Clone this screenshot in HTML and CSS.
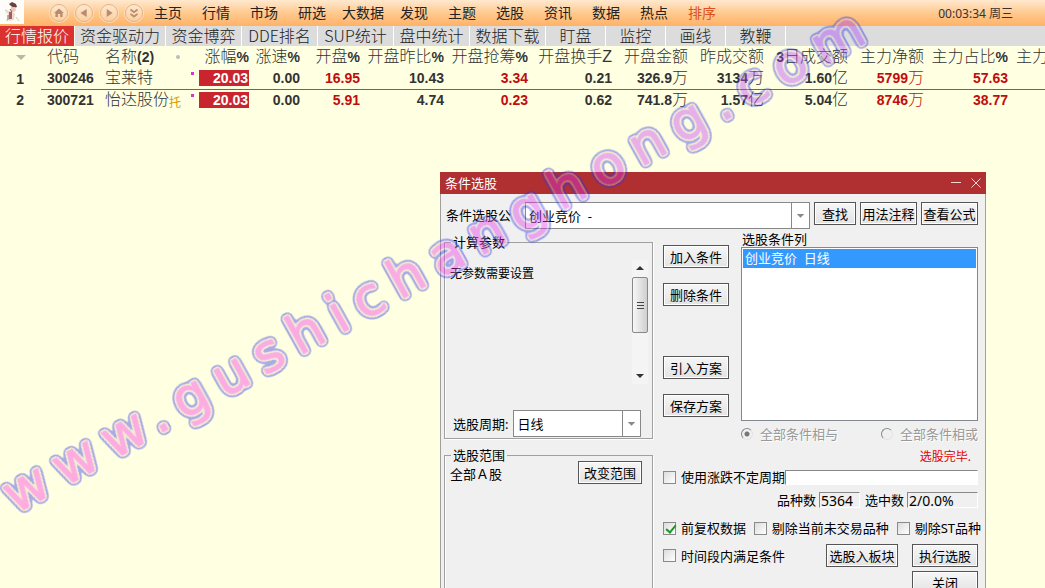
FILE: index.html
```html
<!DOCTYPE html>
<html lang="zh-CN">
<head>
<meta charset="utf-8">
<title>条件选股</title>
<link rel="stylesheet" href="styles.css">
</head>
<body>
<header class="topbar">
  <svg class="logo" viewBox="0 0 24 24" aria-hidden="true">
    <rect width="24" height="24" fill="#fffdf9"/>
    <path d="M9 4l3-2 4 2 1 3-3 1-3-2z" fill="#6b4040"/>
    <path d="M11 7h4l1 3-2 2-3-1z" fill="#f0c8b8"/>
    <path d="M5 9l4 2 3 0 3 3-1 6-5 1-1-7-3-3z" fill="#ead9cc"/>
    <path d="M9 12h3v7H9z" fill="#b05a58"/>
    <path d="M10 9l2 3M8 15v5" stroke="#666" fill="none"/>
    <path d="M16 17l3 4M6 20l2 1" stroke="#c3d0b4" fill="none"/>
  </svg>
  <div class="nav-buttons">
    <button class="round" aria-label="主页"><svg viewBox="0 0 18 18"><path d="M9 4l5.500 5H13v4.500H10.300V10H7.700v3.500H5V9H3.500z"/></svg></button>
    <button class="round" aria-label="后退"><svg viewBox="0 0 18 18"><path d="M12 4.500v9L5 9z"/></svg></button>
    <button class="round" aria-label="前进"><svg viewBox="0 0 18 18"><path d="M6.500 4.500v9L13 9z"/></svg></button>
    <button class="round" aria-label="更多"><svg viewBox="0 0 18 18"><path class="line" d="M5 5l4 3 4-3M5 10l4 3 4-3"/></svg></button>
  </div>
  <nav class="menu">
    <a href="#">主页</a><a href="#">行情</a><a href="#">市场</a><a href="#">研选</a><a href="#" class="wide">大数据</a><a href="#">发现</a><a href="#">主题</a><a href="#">选股</a><a href="#">资讯</a><a href="#">数据</a><a href="#">热点</a><a href="#" class="hot">排序</a>
  </nav>
  <time class="clock">00:03:34 周三</time>
</header>

<nav class="tabs">
  <a href="#" class="active">行情报价</a><a href="#">资金驱动力</a><a href="#">资金博弈</a><a href="#">DDE排名</a><a href="#">SUP统计</a><a href="#">盘中统计</a><a href="#">数据下载</a><a href="#" class="short">盯盘</a><a href="#" class="short">监控</a><a href="#" class="short">画线</a><a href="#" class="short">教鞭</a>
</nav>

<main>
  <table class="quotes">
    <colgroup>
      <col class="c-index"><col class="c-code"><col class="c-name"><col class="c-s"><col class="c-s"><col class="c-m"><col class="c-xl"><col class="c-xl"><col class="c-xl"><col class="c-l"><col class="c-l"><col class="c-xl"><col class="c-l"><col class="c-xl"><col>
    </colgroup>
    <thead>
      <tr>
        <th><svg class="sort" viewBox="0 0 10 5" aria-hidden="true"><path d="M0 0h10L5 5z"/></svg></th>
        <th class="left code">代码</th>
        <th class="left"><div class="name"><span>名称<b>(2)</b></span><i class="grey-dot"></i></div></th>
        <th>涨幅<b>%</b></th><th>涨速<b>%</b></th><th>开盘<b>%</b></th><th>开盘昨比<b>%</b></th><th>开盘抢筹<b>%</b></th><th>开盘换手Z</th><th>开盘金额</th><th>昨成交额</th><th><b>3</b>日成交额</th><th>主力净额</th><th>主力占比<b>%</b></th><th class="left last">主力</th>
      </tr>
    </thead>
    <tbody>
      <tr class="selected">
        <td class="index"><b>1</b></td><td class="left code"><b>300246</b></td>
        <td class="left"><div class="name"><span>宝莱特</span><i class="mark"></i></div></td>
        <td><b class="up-box">20.03</b></td><td><b>0.00</b></td><td class="up"><b>16.95</b></td><td><b>10.43</b></td><td class="up"><b>3.34</b></td><td><b>0.21</b></td><td><b>326.9</b>万</td><td><b>3134</b>万</td><td><b>1.60</b>亿</td><td class="up"><b>5799</b>万</td><td class="up"><b>57.63</b></td><td></td>
      </tr>
      <tr>
        <td class="index"><b>2</b></td><td class="left code"><b>300721</b></td>
        <td class="left"><div class="name"><span>怡达股份<small>托</small></span><i class="mark"></i></div></td>
        <td><b class="up-box">20.03</b></td><td><b>0.00</b></td><td class="up"><b>5.91</b></td><td><b>4.74</b></td><td class="up"><b>0.23</b></td><td><b>0.62</b></td><td><b>741.8</b>万</td><td><b>1.57</b>亿</td><td><b>5.04</b>亿</td><td class="up"><b>8746</b>万</td><td class="up"><b>38.77</b></td><td></td>
      </tr>
    </tbody>
  </table>
</main>

<section class="dialog" role="dialog" aria-labelledby="dialog-title">
  <header class="titlebar">
    <h1 id="dialog-title">条件选股</h1>
    <button class="win" aria-label="最小化"><svg viewBox="0 0 10 10"><path d="M0 4.500h10"/></svg></button>
    <button class="win" aria-label="关闭窗口"><svg viewBox="0 0 10 10"><path d="M.5.500l9 9M9.500.500l-9 9"/></svg></button>
  </header>
  <div class="body">
    <div class="formula">
      <label for="formula">条件选股公</label>
      <div class="combo grow"><select id="formula"><option>创业竞价&nbsp; -</option></select><svg viewBox="0 0 18 24" aria-hidden="true"><path d="M5 10.500h8l-4 4z"/></svg></div>
      <button class="btn find">查找</button>
      <button class="btn tight">用法注释</button>
      <button class="btn tight">查看公式</button>
    </div>
    <div class="columns">
      <div class="left-col">
        <fieldset class="group params">
          <legend>计算参数</legend>
          <div class="param-view">
            <p>无参数需要设置</p>
            <div class="scroll" aria-hidden="true">
              <svg viewBox="0 0 15 17"><path d="M4 10l4-4 4 4z"/></svg>
              <div class="thumb"><i></i><i></i><i></i></div>
              <svg class="down" viewBox="0 0 15 17"><path d="M4 7h8l-4 4z"/></svg>
            </div>
          </div>
          <div class="period">
            <label for="period">选股周期:</label>
            <div class="combo grow"><select id="period"><option>日线</option></select><svg viewBox="0 0 18 24" aria-hidden="true"><path d="M5 10.500h8l-4 4z"/></svg></div>
          </div>
        </fieldset>
        <fieldset class="group range">
          <legend>选股范围</legend>
          <div class="range-row"><span>全部Ａ股</span><button class="btn change">改变范围</button></div>
        </fieldset>
      </div>
      <div class="right-col">
        <div class="conditions">
          <div class="actions">
            <button class="btn">加入条件</button>
            <button class="btn">删除条件</button>
            <button class="btn apart">引入方案</button>
            <button class="btn">保存方案</button>
          </div>
          <div class="list-side">
            <span id="list-label">选股条件列</span>
            <ul class="list" role="listbox" aria-labelledby="list-label"><li role="option" aria-selected="true">创业竞价&nbsp; 日线</li></ul>
            <div class="radios">
              <label><input type="radio" name="logic" checked disabled>全部条件相与</label>
              <label><input type="radio" name="logic" disabled>全部条件相或</label>
            </div>
          </div>
        </div>
        <p class="status">选股完毕.</p>
        <div class="row unfixed">
          <label class="check"><input type="checkbox">使用涨跌不定周期</label>
          <input class="field" type="text" aria-label="周期">
        </div>
        <div class="row counts">
          <label for="total">品种数</label><input id="total" class="field count total" readonly value="5364">
          <label for="hits">选中数</label><input id="hits" class="field count hits" readonly value="2/0.0%">
        </div>
        <div class="row options">
          <label class="check"><input type="checkbox" checked>前复权数据</label>
          <label class="check"><input type="checkbox">剔除当前未交易品种</label>
          <label class="check"><input type="checkbox">剔除ST品种</label>
        </div>
        <div class="row run">
          <label class="check"><input type="checkbox">时间段内满足条件</label>
          <button class="btn block">选股入板块</button>
          <button class="btn">执行选股</button>
        </div>
        <div class="row close"><button class="btn">关闭</button></div>
      </div>
    </div>
  </div>
</section>

<svg class="watermark" aria-hidden="true">
  <defs>
    <linearGradient id="ink" x1="0" x2="1"><stop offset="0" stop-color="#ff32de"/><stop offset=".5" stop-color="#f032e6"/><stop offset="1" stop-color="#a040ff"/></linearGradient>
    <filter id="rings" x="-2%" y="-20%" width="104%" height="140%" color-interpolation-filters="sRGB">
      <feGaussianBlur in="SourceAlpha" stdDeviation="2.500"/>
      <feComponentTransfer result="wide"><feFuncA type="linear" slope="24" intercept="-1"/></feComponentTransfer>
      <feFlood flood-color="#3030e6"/>
      <feComposite in2="wide" operator="in" result="outer"/>
      <feGaussianBlur in="SourceAlpha" stdDeviation="1.500"/>
      <feComponentTransfer result="narrow"><feFuncA type="linear" slope="12" intercept="-1"/></feComponentTransfer>
      <feFlood flood-color="#dcd4c8"/>
      <feComposite in2="narrow" operator="in" result="inner"/>
      <feMerge><feMergeNode in="outer"/><feMergeNode in="inner"/><feMergeNode in="SourceGraphic"/></feMerge>
    </filter>
  </defs>
  <g transform="translate(15 514) rotate(-29)">
    <text>www.gushichanghong.com</text>
  </g>
</svg>
</body>
</html>
```

FILE: styles.css
```css
* { box-sizing: border-box; }

body {
  margin: 0;
  height: 100vh;
  position: relative;
  overflow: hidden;
  background: #ffffe1;
  color: #333;
  font-family: "Liberation Sans", "Noto Sans CJK SC", sans-serif;
}

a { color: inherit; text-decoration: none; }
button, input, select { font: inherit; color: inherit; }
p, h1, ul { margin: 0; padding: 0; }

/* top menu */
.topbar {
  display: flex;
  align-items: center;
  height: 26px;
  background: linear-gradient(#ffe9cf, #ffc98f 50%, #ffb266);
}
.logo { width: 24px; height: 24px; flex: none; align-self: flex-start; }
.nav-buttons { display: flex; gap: 7px; margin-left: 26px; }
.round {
  width: 18px;
  height: 18px;
  padding: 0;
  border: 1px solid #e3b48c;
  border-radius: 50%;
  background: linear-gradient(#ffe8cf, #fbcfa0);
  box-shadow: 0 0 0 1px #ffdfba;
}
.round svg { display: block; width: 16px; height: 16px; fill: #b98c6c; }
.round .line { fill: none; stroke: #b98c6c; stroke-width: 2; }
.menu { display: flex; margin-left: 1px; font-size: 14px; line-height: 26px; color: #222; white-space: nowrap; }
.menu a { width: 48px; text-align: center; }
.menu .wide { width: 54px; }
.menu .hot { color: #d8531f; }
.clock { margin: 0 32px 0 auto; font-family: "Noto Sans", "Noto Sans CJK SC", sans-serif; font-size: 12px; white-space: nowrap; }

/* page tabs */
.tabs {
  display: flex;
  height: 20px;
  background: #dcdcdc;
  font-family: "Noto Sans CJK SC", sans-serif;
  font-size: 16px;
  line-height: 18px;
  font-weight: 300;
  color: #222;
  white-space: nowrap;
}
.tabs a { min-width: 76px; padding: 0 5px; border-right: 1px solid #fffff0; text-align: center; }
.tabs .short { min-width: 60px; }
.tabs .active { min-width: 75px; background: #dc322f; color: #fff; }

/* quotes */
.quotes { width: 100%; table-layout: fixed; border-collapse: collapse; font-size: 16px; line-height: 20px; white-space: nowrap; }
.c-index { width: 41px; }
.c-code { width: 60px; }
.c-name { width: 98px; }
.c-s { width: 51px; }
.c-m { width: 60px; }
.c-l { width: 76px; }
.c-xl { width: 84px; }
.quotes th, .quotes td { height: 21px; padding: 0 1px 0 0; text-align: right; font-weight: 300; }
.quotes th { height: 22px; }
.quotes b { font-size: 14px; font-weight: 700; line-height: 16px; }
.quotes .left { text-align: left; }
.quotes .code { padding-left: 6px; }
.quotes .index { padding-right: 17px; }
.quotes .last { padding-left: 7px; }
.quotes .up { color: #c00d0d; }
.selected td:not(:first-child) { border-bottom: 1px solid #2a7f96; }
.sort { display: block; width: 10px; margin-left: 16px; fill: #b8b8a8; }
.name { display: flex; justify-content: space-between; align-items: center; height: 20px; padding: 0 4px; }
.name small { font-size: 12px; font-weight: 400; line-height: 12px; color: #d39a00; vertical-align: -2px; }
.grey-dot { width: 4px; height: 4px; margin-right: 14px; border-radius: 50%; background: #bbb; }
.mark { width: 3px; height: 3px; align-self: flex-start; margin-top: 4px; background: #e02be0; }
.quotes .up-box { display: block; height: 16px; padding-right: 1px; background: #c9252f; color: #fff; }

/* dialog window */
.dialog {
  position: absolute;
  left: 440px;
  top: 172px;
  width: 546px;
  background: #f0f0f0;
  color: #000;
  font-family: "Noto Sans", "Noto Sans CJK SC", sans-serif;
  font-size: 13px;
  line-height: 16px;
  white-space: nowrap;
}
.titlebar { display: flex; align-items: center; gap: 10px; height: 22px; padding: 0 5px; background: #b02f31; color: #fff; }
.titlebar h1 { flex: 1; font-size: 13px; font-weight: 400; }
.win { width: 10px; height: 10px; padding: 0; border: 0; background: none; }
.win svg { display: block; width: 10px; height: 10px; fill: none; stroke: #f3d5d5; }
.body { padding: 8px 7px 0 3px; border: solid #a0a0a0; border-width: 0 1px; }

.btn {
  height: 23px;
  min-width: 66px;
  padding: 0 5px;
  border: 1px solid #555;
  background: linear-gradient(#f6f6f6, #e3e3e3);
  box-shadow: inset 0 0 0 1px #fff;
  line-height: 20px;
}
.btn.tight { min-width: 57px; padding: 0 1px; }
.btn.find { min-width: 42px; }
.btn.block { min-width: 72px; padding: 0 2px; }
.btn.change { min-width: 63px; }

.combo { display: flex; height: 27px; border: 1px solid #888; background: #fff; }
.combo select { flex: 1; min-width: 0; padding: 0 3px; border: 0; appearance: none; background: none; }
.combo svg { width: 18px; height: 25px; border-left: 1px solid #888; fill: #888; }
.grow { flex: 1; }

.formula { display: flex; align-items: flex-start; gap: 4px; }
.formula label { width: 77px; padding-left: 2px; line-height: 26px; }

.columns { display: flex; gap: 10px; }
.left-col { flex: 2; display: flex; flex-direction: column; gap: 8px; margin-top: 5px; }
.right-col { width: 315px; flex: none; }

.group { min-width: 0; margin: 0; padding: 0; border: 1px solid #a0a0a0; box-shadow: inset 1px 0 #fff, 1px 1px #fff; }
.group legend { margin-left: 6px; padding: 0 2px; }
.range { flex: 1; }
.param-view { display: flex; justify-content: space-between; padding: 10px 4px 0 5px; font-size: 12px; }
.param-view p { padding-top: 6px; }
.scroll { display: flex; flex-direction: column; width: 16px; height: 124px; background: #f4f4f4; }
.scroll svg { width: 15px; height: 17px; fill: #333; }
.scroll .down { margin-top: auto; }
.thumb {
  display: flex;
  flex-direction: column;
  align-items: center;
  justify-content: center;
  gap: 2px;
  height: 56px;
  border: 1px solid #888;
  border-radius: 2px;
  background: linear-gradient(90deg, #f7f7f7, #cfcfcf);
}
.thumb i { width: 7px; height: 1px; background: #444; }
.period { display: flex; align-items: center; gap: 5px; padding: 26px 11px 1px 8px; }

.range-row { display: flex; justify-content: space-between; align-items: center; padding: 0 10px 0 5px; margin-top: -2px; }
.range-row span { padding-top: 3px; }

.conditions { display: flex; gap: 12px; }
.actions { display: flex; flex-direction: column; gap: 15px; padding-top: 16px; }
.actions .apart { margin-top: 35px; }
.list-side { flex: 1; padding-top: 2px; }
.list-side > span { display: block; padding-left: 1px; }
.list { height: 174px; padding: 1px; border: 1px solid #828790; background: #fff; list-style: none; }
.list li { padding: 0 2px; background: #3399ff; color: #fff; line-height: 19px; }
.radios { display: flex; justify-content: space-between; margin-top: 5px; color: #999; }
.radios label { display: flex; align-items: center; gap: 7px; text-shadow: 1px 1px #fff; }
.radios input {
  appearance: none;
  width: 12px;
  height: 12px;
  margin: 0;
  border: 1px solid #888;
  border-right-color: #e3e3e3;
  border-bottom-color: #e3e3e3;
  border-radius: 50%;
}
.radios input:checked { background: radial-gradient(circle, #777 2px, #f0f0f0 3px); }
.status { margin-top: 7px; padding-right: 7px; text-align: right; font-size: 12px; color: #e00000; }

.row { display: flex; align-items: center; }
.check { display: flex; align-items: center; gap: 5px; }
.check input {
  appearance: none;
  flex: none;
  width: 13px;
  height: 13px;
  margin: 0;
  border: 1px solid #8a8a8a;
  background: linear-gradient(135deg, #dcdcdc, #fff);
}
.check input:checked::before {
  content: "";
  display: block;
  width: 4px;
  height: 8px;
  margin: 0 0 0 4px;
  border: solid #21952b;
  border-width: 0 2px 2px 0;
  transform: rotate(40deg);
}
.field { height: 15px; padding: 0 1px; border: 1px solid #fff; border-top-color: #888; border-left-color: #888; background: #fff; }
.unfixed { margin-top: 4px; }
.unfixed .field { flex: 1; min-width: 0; }
.counts { justify-content: flex-end; gap: 3px; margin-top: 7px; }
.count { height: 16px; background: #f0f0f0; font-size: 14px; line-height: 14px; }
.total { width: 41px; margin-right: 2px; }
.hits { width: 71px; }
.options { justify-content: space-between; margin: 12px -3px 0 0; }
.run { gap: 14px; margin-top: 8px; }
.run .check { margin-right: auto; }
.close { justify-content: flex-end; margin: 4px 0; }

/* watermark across the desktop */
.watermark { position: absolute; inset: 0; width: 100%; height: 100%; pointer-events: none; opacity: .4; }
.watermark text {
  font-family: "DejaVu Sans", sans-serif;
  font-size: 54px;
  letter-spacing: 12px;
  fill: url(#ink);
  stroke: url(#ink);
  stroke-width: 1px;
  filter: url(#rings);
}
```
